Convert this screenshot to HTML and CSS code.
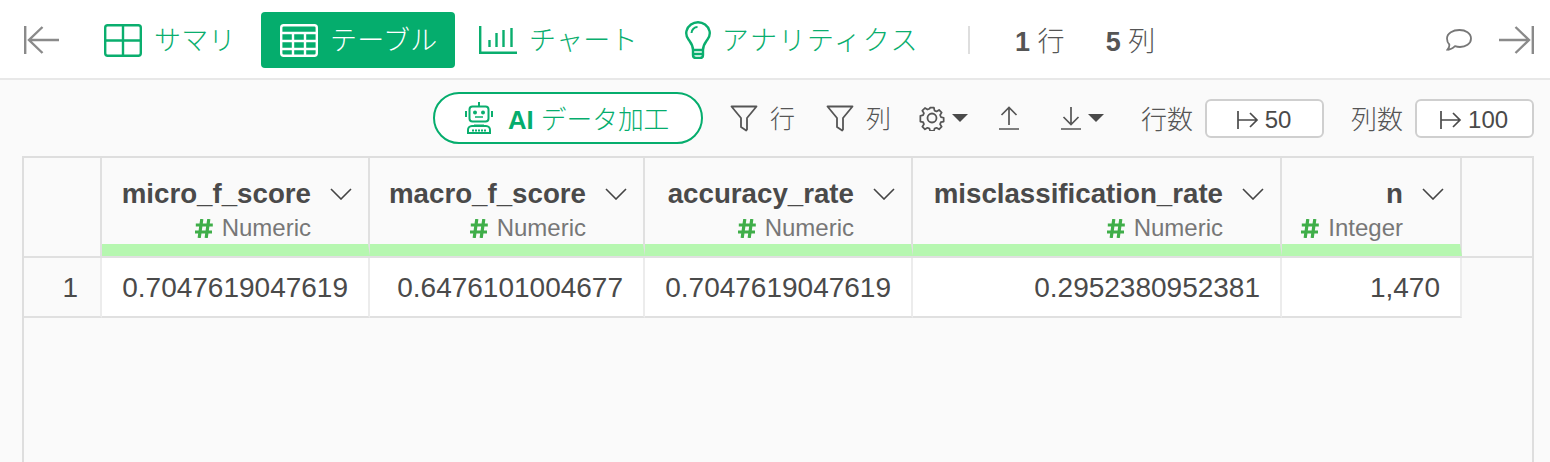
FILE: index.html
```html
<!DOCTYPE html>
<html lang="ja">
<head>
<meta charset="utf-8">
<title>テーブル</title>
<link rel="stylesheet" href="styles.css">
</head>
<body>
<svg class="defs" width="0" height="0"><defs>
  <symbol id="hash" viewBox="0 0 18 19"><path d="M6.800 0 4.200 19M13.800 0l-2.600 19M.8 6h17M0 13h17" fill="none" stroke="#3fae49" stroke-width="3.200"/></symbol>
  <symbol id="chev" viewBox="0 0 22 12"><path d="M1 1l10 10L21 1" fill="none" stroke="#444" stroke-width="1.600"/></symbol>
  <symbol id="limit" viewBox="0 0 22 18"><path d="M1 0v18M1 9h19M13 2l7 7-7 7" fill="none" stroke="#4a4a4a" stroke-width="1.700"/></symbol>
</defs></svg>
<div class="page">
  <header class="topbar">
    <svg class="ic-back" width="36" height="30" viewBox="0 0 36 30"><path d="M1.200 1v28M35 15H5M18.500 2 5 15l13.500 13" fill="none" stroke="#8a8a8a" stroke-width="2.400"/></svg>
    <div class="tab tab-summary">
      <svg width="38" height="33" viewBox="0 0 38 33"><rect x="1.200" y="1.200" width="35.600" height="30.600" rx="2.500" fill="none" stroke="#0aae6e" stroke-width="2.400"/><path d="M19 1v31M1 16.500h36" stroke="#0aae6e" stroke-width="2.400"/></svg>
      <span class="tab-label">サマリ</span>
    </div>
    <div class="tab tab-active">
      <svg width="38" height="33" viewBox="0 0 38 33"><rect x="1.200" y="1.200" width="35.600" height="30.600" rx="2.500" fill="none" stroke="#fff" stroke-width="2.400"/><path d="M1 9h36M1 17h36M1 25h36M13 9v23M25 9v23" stroke="#fff" stroke-width="2.400"/></svg>
      <span class="tab-label">テーブル</span>
    </div>
    <div class="tab tab-chart">
      <svg width="38" height="28" viewBox="0 0 38 28"><path d="M1.200 0v26.800H38" fill="none" stroke="#0aae6e" stroke-width="2.400"/><path d="M10.500 14v7M17.500 7v14M24.500 4v17M32.500 2v19" stroke="#0aae6e" stroke-width="2.400"/></svg>
      <span class="tab-label">チャート</span>
    </div>
    <div class="tab tab-insight">
      <svg width="26" height="38" viewBox="0 0 26 38"><path d="M8 29c0-5-2-7-4.500-10.500C1 15 1 12 1.500 10 3 4.500 8 1.300 13 1.300S23 4.500 24.500 10c.5 2 .5 5-2 8.500C20 22 18 24 18 29zM8 29v5c0 2 1.500 3 3 3h4c1.500 0 3-1 3-3v-5M8 33h10" fill="none" stroke="#0aae6e" stroke-width="2.400"/><path d="M6.500 12c0-3.500 3-6 6-6" fill="none" stroke="#0aae6e" stroke-width="2"/></svg>
      <span class="tab-label">アナリティクス</span>
    </div>
    <span class="divider"></span>
    <span class="count count-rows"><b>1</b> 行</span>
    <span class="count count-cols"><b>5</b> 列</span>
    <span class="spacer"></span>
    <svg class="ic-comment" width="26" height="22" viewBox="0 0 26 22"><path d="M13.500 1C19.500 1 25 4 25 9.500S19.500 18 14 18c-2 0-3.500-.3-5-.8C7 19 4.500 21 1.500 20.700 3 19 3.500 17.500 3.300 15.500 1.800 14 1 12 1 9.500 1 4 7 1 13.500 1z" fill="none" stroke="#777" stroke-width="1.800"/></svg>
    <svg class="ic-collapse" width="36" height="30" viewBox="0 0 36 30"><path d="M34.800 1v28M1 15h30M17.500 2 31 15 17.500 28" fill="none" stroke="#8a8a8a" stroke-width="2.400"/></svg>
  </header>

  <div class="toolbar">
    <button class="ai-btn">
      <svg width="28" height="32" viewBox="0 0 28 32"><g fill="none" stroke="#0aae6e" stroke-width="2"><path d="M14 0v4"/><rect x="4.500" y="4.500" width="19" height="15" rx="3"/><path d="M1 9v6M27 9v6M9 23.500h10M3 31v-3c0-2 1.500-4 4-4h14c2.500 0 4 2 4 4v3z"/><path d="M10 15h8" stroke-width="1.500"/><path d="M7 28.500h14" stroke-dasharray="2 1" stroke-width="2"/></g><circle cx="10" cy="10.500" r="2" fill="#0aae6e"/><circle cx="18" cy="10.500" r="2" fill="#0aae6e"/></svg>
      <span class="ai-label"><b>AI</b> データ加工</span>
    </button>
    <span class="tool tool-filter">
      <svg width="28" height="27" viewBox="0 0 28 27"><path d="M1.500 1.500h25L17 13v11.500l-.8 1-5.200-3.500V13z" fill="none" stroke="#555" stroke-width="1.800" stroke-linejoin="round"/></svg>
      <span class="tool-text">行</span>
    </span>
    <span class="tool tool-filter tool-filter-col">
      <svg width="28" height="27" viewBox="0 0 28 27"><path d="M1.500 1.500h25L17 13v11.500l-.8 1-5.200-3.500V13z" fill="none" stroke="#555" stroke-width="1.800" stroke-linejoin="round"/></svg>
      <span class="tool-text">列</span>
    </span>
    <span class="tool tool-gear">
      <svg width="26" height="26" viewBox="0 0 26 26"><circle cx="13" cy="13" r="4.500" fill="none" stroke="#555" stroke-width="1.800"/><path d="M10.800 1.200h4.400l.7 3.300 2.300 1 2.900-1.800 3 3.100-1.800 2.800.9 2.300 3.200.8v4.400l-3.200.7-.9 2.300 1.800 2.900-3 3-2.900-1.800-2.300 1-.7 2.600h-4.400l-.7-2.600-2.300-1-2.900 1.800-3-3 1.800-2.900-.9-2.300-3.200-.7V10.500l3.200-.8.900-2.300-1.800-2.800 3-3.100 2.900 1.800 2.300-1z" transform="translate(1.700 1.700) scale(.87)" fill="none" stroke="#555" stroke-width="2" stroke-linejoin="round"/></svg>
      <i class="caret"></i>
    </span>
    <svg class="ic-up" width="20" height="24" viewBox="0 0 20 24"><path d="M10 19V2M2.500 9 10 1.500 17.500 9M0 23h20" fill="none" stroke="#555" stroke-width="1.700"/></svg>
    <span class="tool tool-down">
      <svg width="20" height="24" viewBox="0 0 20 24"><path d="M10 1v17M2.500 11 10 18.500 17.500 11M0 23h20" fill="none" stroke="#555" stroke-width="1.700"/></svg>
      <i class="caret"></i>
    </span>
    <span class="limit-label limit-rows">行数</span>
    <span class="limit-box limit-box-rows"><svg class="limit-arrow" width="22" height="18"><use href="#limit"/></svg>50</span>
    <span class="limit-label limit-cols">列数</span>
    <span class="limit-box"><svg class="limit-arrow" width="22" height="18"><use href="#limit"/></svg>100</span>
  </div>

  <div class="frame">
    <div class="grid head">
      <div class="hcell hcell-index"></div>
      <div class="hcell"><div class="hname">micro_f_score<svg class="chev" width="22" height="12"><use href="#chev"/></svg></div><div class="htype"><svg class="hash" width="18" height="19"><use href="#hash"/></svg>Numeric</div></div>
      <div class="hcell"><div class="hname">macro_f_score<svg class="chev" width="22" height="12"><use href="#chev"/></svg></div><div class="htype"><svg class="hash" width="18" height="19"><use href="#hash"/></svg>Numeric</div></div>
      <div class="hcell"><div class="hname">accuracy_rate<svg class="chev" width="22" height="12"><use href="#chev"/></svg></div><div class="htype"><svg class="hash" width="18" height="19"><use href="#hash"/></svg>Numeric</div></div>
      <div class="hcell"><div class="hname">misclassification_rate<svg class="chev" width="22" height="12"><use href="#chev"/></svg></div><div class="htype"><svg class="hash" width="18" height="19"><use href="#hash"/></svg>Numeric</div></div>
      <div class="hcell"><div class="hname">n<svg class="chev" width="22" height="12"><use href="#chev"/></svg></div><div class="htype"><svg class="hash" width="18" height="19"><use href="#hash"/></svg>Integer</div></div>
    </div>
    <div class="grid body-row">
      <div class="cell cell-index">1</div>
      <div class="cell">0.7047619047619</div>
      <div class="cell">0.6476101004677</div>
      <div class="cell">0.7047619047619</div>
      <div class="cell">0.2952380952381</div>
      <div class="cell">1,470</div>
    </div>
  </div>
</div>
</body>
</html>
```

FILE: styles.css
```css
* { box-sizing: border-box; }
html, body { margin: 0; height: 100%; overflow: hidden; }
body {
  background: #fafafa;
  color: #4a4a4a;
  font-family: "Liberation Sans", "Noto Sans CJK JP", sans-serif;
}
.defs { display: block; height: 0; }
.page { height: 462px; display: flex; flex-direction: column; overflow: hidden; }

.topbar {
  height: 80px;
  flex: none;
  background: #fff;
  border-bottom: 2px solid #e8e8e8;
  display: flex;
  align-items: center;
  padding: 2px 16px 0 24px;
}
.ic-back { flex: none; }
.tab {
  display: flex;
  align-items: center;
  gap: 12px;
  color: #0aae6e;
  font-size: 27px;
  font-weight: 300;
  letter-spacing: .3px;
  white-space: nowrap;
}
.tab-label { padding-bottom: 3px; }
.tab-summary { margin-left: 44px; }
.tab-active {
  margin-left: 25px;
  width: 194px;
  height: 56px;
  padding-left: 19px;
  background: #05ad6d;
  color: #fff;
  border-radius: 4px;
}
.tab-chart { margin-left: 24px; }
.tab-insight { margin-left: 47px; gap: 11px; letter-spacing: 1.6px; }
.divider { width: 2px; height: 28px; background: #dedede; margin-left: 49px; }
.count { font-size: 27px; font-weight: 300; color: #555; padding-bottom: 2px; }
.count b { font-weight: 700; }
.count-rows { margin-left: 45px; }
.count-cols { margin-left: 41px; }
.spacer { flex: 1; }
.ic-comment { margin-right: 26px; }

.toolbar {
  height: 76px;
  flex: none;
  display: flex;
  align-items: center;
  padding-left: 433px;
  color: #555;
  font-size: 25px;
  font-weight: 300;
}
.ai-btn {
  width: 270px;
  height: 52px;
  background: #fff;
  border: 2px solid #05ad6d;
  border-radius: 26px;
  display: flex;
  align-items: center;
  padding: 0 0 0 30px;
  gap: 15px;
  color: #05ad6d;
  font-family: inherit;
  font-size: 25.700px;
  font-weight: 300;
}
.ai-label { padding-bottom: 2px; }
.ai-label b { font-weight: 700; }
.tool { display: flex; align-items: center; }
.tool-text { padding-bottom: 2px; }
.tool-filter { gap: 12px; margin-left: 27px; }
.tool-filter-col { margin-left: 31px; }
.tool-gear { margin-left: 28px; gap: 7px; }
.ic-up { margin-left: 31px; }
.tool-down { margin-left: 42px; gap: 7px; }
.caret {
  display: block;
  width: 0;
  height: 0;
  border-left: 8px solid transparent;
  border-right: 8px solid transparent;
  border-top: 8px solid #4a4a4a;
}
.limit-label { white-space: nowrap; font-size: 26px; padding-bottom: 2px; }
.limit-rows { margin-left: 37px; }
.limit-cols { margin-left: 27px; }
.limit-box {
  width: 119px;
  height: 39px;
  margin-left: 12px;
  padding: 3px 1px 0 0;
  background: #fff;
  border: 2px solid #cfcfcf;
  border-radius: 6px;
  display: flex;
  align-items: center;
  justify-content: center;
  gap: 6px;
  font-size: 24px;
  color: #4a4a4a;
}
.limit-arrow { flex: none; }

.frame {
  flex: 1;
  margin: 0 16px 0 22px;
  border: 2px solid #dedede;
  border-bottom: 0;
}
.grid {
  display: grid;
  grid-template-columns: 78px 268px 275px 268px 369px 180px;
}
.head { height: 100px; border-bottom: 2px solid #e0e0e0; }
.hcell {
  height: 98px;
  border-right: 2px solid #e0e0e0;
  padding: 16px 16px 0 0;
  border-bottom: 12px solid #b6f7b0;
  text-align: right;
}
.hcell-index { border-bottom: 0; }
.hname {
  font-size: 27.700px;
  font-weight: 700;
  line-height: 40px;
  color: #4a4a4a;
  display: flex;
  justify-content: flex-end;
  align-items: center;
  white-space: nowrap;
}
.chev { margin-left: 19px; flex: none; }
.htype {
  font-size: 24px;
  line-height: 32px;
  color: #777;
  padding-right: 41px;
  margin-top: -2px;
  white-space: nowrap;
  display: flex;
  justify-content: flex-end;
  align-items: center;
  gap: 9px;
}
.hash { flex: none; }

.body-row { height: 60px; width: 1438px; }
.cell {
  background: #fff;
  height: 60px;
  border-right: 2px solid #ececec;
  border-bottom: 2px solid #e0e0e0;
  font-size: 28px;
  line-height: 60px;
  padding-right: 20px;
  text-align: right;
  color: #4a4a4a;
}
.cell-index { background: #fafafa; padding-right: 22px; }
```
